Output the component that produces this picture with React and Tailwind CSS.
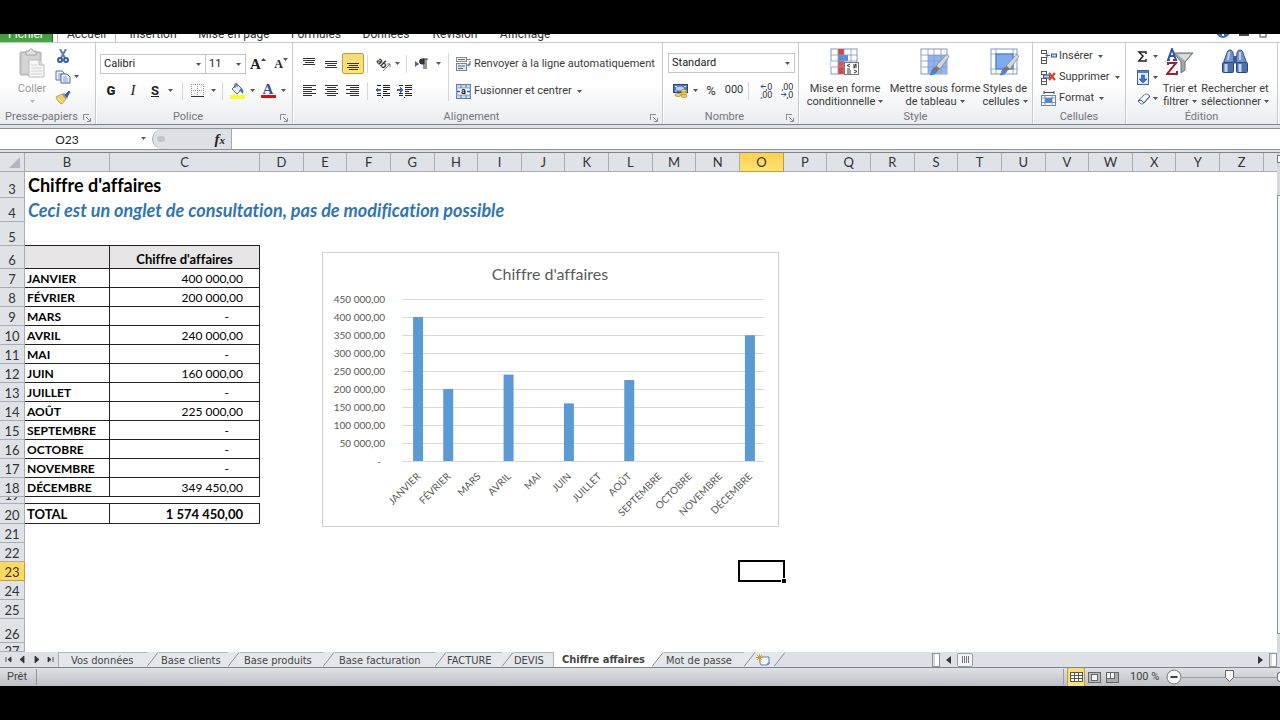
import React, { useState } from 'react';
import clsx from 'clsx';

const COLUMNS = 'DEFGHIJKLMNOPQRSTUVWXYZ'.split('');

const MONTHS = [
  { name: 'JANVIER', value: 400000, text: '400 000,00' },
  { name: 'FÉVRIER', value: 200000, text: '200 000,00' },
  { name: 'MARS', value: 0, text: '-' },
  { name: 'AVRIL', value: 240000, text: '240 000,00' },
  { name: 'MAI', value: 0, text: '-' },
  { name: 'JUIN', value: 160000, text: '160 000,00' },
  { name: 'JUILLET', value: 0, text: '-' },
  { name: 'AOÛT', value: 225000, text: '225 000,00' },
  { name: 'SEPTEMBRE', value: 0, text: '-' },
  { name: 'OCTOBRE', value: 0, text: '-' },
  { name: 'NOVEMBRE', value: 0, text: '-' },
  { name: 'DÉCEMBRE', value: 349450, text: '349 450,00' },
];

// Height of the row header content, without its bottom border
const ROW_HEIGHTS = {
  3: 'h-[25px]',
  4: 'h-[23px]',
  5: 'h-[23px]',
  6: 'h-[22px]',
  19: 'h-[6px]',
  20: 'h-[19px]',
  26: 'h-[23px]',
  27: 'h-[8px]',
};

const ROWS = Array.from({ length: 25 }, (_, i) => i + 3);

const Caret = ({ light }) => (
  <svg viewBox="0 0 5 3" className="w-[5px] h-[3px] shrink-0" aria-hidden="true">
    <path d="M0 0h5L2.5 3z" fill={light ? '#b5b5b5' : '#555'} />
  </svg>
);

const Sep = ({ tall }) => (
  <div className={clsx('w-px shrink-0 bg-[#d5d7da]', tall ? 'h-12' : 'h-[18px]')} />
);

const IconButton = ({ label, active, className, children }) => (
  <button
    type="button"
    aria-label={label}
    title={label}
    className={clsx(
      'h-[21px] flex items-center justify-center shrink-0 rounded-[2px]',
      active && 'bg-gradient-to-b from-[#fbd976] to-[#ffe56b] border border-[#c79b3b]',
      className || 'w-[22px]'
    )}
  >
    {children}
  </button>
);

const Lines = ({ rows, color = '#333' }) => (
  <svg viewBox="0 0 14 14" className="w-[14px] h-[14px]" shapeRendering="crispEdges">
    {rows.map(([x, y, w], i) => (
      <rect key={i} x={x} y={y} width={w} height="1" fill={color} />
    ))}
  </svg>
);

const IndentIcon = ({ out }) => (
  <svg viewBox="0 0 16 14" className="w-4 h-[14px]" shapeRendering="crispEdges">
    <path d="M2 1h4M8 1h7M8 3h7M8 5h7M8 7h4M2 9h4M8 9h7M2 11h4M8 11h7M7 13h1" stroke="#222" strokeWidth="1" transform="translate(0 .5)" />
    <path d={out ? 'M0 6l3-3v2h3v2H3v2z' : 'M6 6L3 3v2H0v2h3v2z'} fill="#3b63b5" />
  </svg>
);

const Grid = ({ children }) => (
  <svg viewBox="0 0 30 28" className="w-[30px] h-7">
    <rect x="1" y="1" width="26" height="25" fill="#fff" stroke="#7f9cc9" />
    {children}
  </svg>
);

const Brush = () => (
  <g>
    <path d="M28 7c1 1 1 2 0 3l-8 11-4-3 9-10c1-1 2-2 3-1z" fill="#cfd6de" stroke="#78828e" strokeWidth=".7" />
    <path d="M20 21l-4-3-2 2 3 3z" fill="#a86c3c" />
    <path d="M14 20l3 3c-1 3-5 4-7 4 2-2 1-5 4-7z" fill="#4c86d0" stroke="#2c5fa8" strokeWidth=".5" />
  </g>
);

const Group = ({ label, launcher, className, children }) => (
  <section className={clsx('flex flex-col border-r border-[#c6c9cd] shadow-[1px_0_0_#fff]', className)}>
    <div className="h-[66px] flex">{children}</div>
    <div className="h-[15px] pt-[2px] flex items-center text-[#73767c]">
      <span className="flex-1 text-center whitespace-nowrap">{label}</span>
      {launcher && (
        <button type="button" aria-label={`Options ${label}`} className="w-3 h-3 flex items-center">
          <svg viewBox="0 0 8 8" className="w-2 h-2" fill="none" stroke="#8a8d92">
            <path d="M.5 6V.5H6M3 3l4 4M7.500 4v3.500H4" />
          </svg>
        </button>
      )}
    </div>
  </section>
);

const BigButton = ({ icon, lines, muted, className }) => (
  <button type="button" className={clsx('flex flex-col items-center pt-[5px] shrink-0', muted && 'text-[#9a9a9a]', className)}>
    <span className="h-[34px] flex items-start">{icon}</span>
    <span className="leading-[13px] whitespace-nowrap">{lines[0]}</span>
    <span className="h-[13px] leading-[13px] whitespace-nowrap flex items-center gap-[3px]">
      {lines[1]}
      <Caret light={muted} />
    </span>
  </button>
);

const SmallButton = ({ icon, label }) => (
  <button type="button" className="h-[21px] flex items-center whitespace-nowrap">
    <span className="w-[18px]">{icon}</span>
    {label}
    <span className="ml-[5px]"><Caret /></span>
  </button>
);

const Combo = ({ label, value, className }) => (
  <div className={clsx('relative h-5 border border-[#c3c6ca] bg-white', className)}>
    <select aria-label={label} defaultValue={value} className="w-full h-full pl-[3px] pt-px appearance-none bg-transparent text-[#222] outline-none">
      <option>{value}</option>
    </select>
    <span className="absolute right-1 top-2 pointer-events-none"><Caret /></span>
  </div>
);

const RIBBON_TABS = [
  { name: 'Insertion', w: 'w-[74px]' },
  { name: 'Mise en page', w: 'w-[88px]' },
  { name: 'Formules', w: 'w-[76px]' },
  { name: 'Données', w: 'w-[64px]' },
  { name: 'Révision', w: 'w-[74px]' },
  { name: 'Affichage', w: 'w-[66px]' },
];

// Only the lower edge of the tab strip shows under the top band
const RibbonTabs = () => (
  <nav className="h-[9px] overflow-hidden flex items-end bg-white border-b border-[#c6c9cd] text-xs leading-4 text-[#333]">
    <button type="button" className="w-[53px] h-4 shrink-0 bg-gradient-to-b from-[#2f8f35] to-[#4aa83f] text-white border-r border-[#1d6b25]">Fichier</button>
    <button type="button" className="w-[59px] ml-1 h-4 shrink-0 border-x border-[#b9bcc1]">Accueil</button>
    {RIBBON_TABS.map((t) => (
      <button key={t.name} type="button" className={clsx('h-4 shrink-0 whitespace-nowrap', t.w)}>{t.name}</button>
    ))}
    <svg viewBox="0 0 70 16" className="w-[70px] h-4 ml-auto mr-3 mb-[3px]">
      <path d="M2 11l3-3 3 3M7 11l3-3 3 3" fill="none" stroke="#444" />
      <circle cx="25" cy="8" r="7" fill="#3d73c4" />
      <path d="M25 9v1M25 11v2" stroke="#fff" strokeWidth="2" />
      <path d="M41 12h10" stroke="#444" strokeWidth="2" />
      <rect x="62" y="6" width="6" height="8" fill="none" stroke="#444" />
    </svg>
  </nav>
);

const ClipboardGroup = () => (
  <Group label="Presse-papiers" launcher className="w-24">
    <BigButton
      muted
      className="w-8 ml-4"
      lines={['Coller', '']}
      icon={
        <svg viewBox="0 0 26 30" className="w-[26px] h-[30px]">
          <rect x="1" y="4" width="21" height="23" rx="1" fill="#c9c7c7" stroke="#b0aeae" />
          <rect x="3" y="6" width="17" height="19" fill="#d6d4d4" />
          <path d="M7 7V3h3c0-3 4-3 4 0h3v4z" fill="#e3e3e3" stroke="#a5a5a5" />
          <path d="M10 12h10l5 5v12H10z" fill="#f7f7f7" stroke="#bdbdbd" />
          <path d="M20 12v5h5" fill="#ddd" stroke="#bdbdbd" />
          <path d="M12 17h6M12 20h11M12 23h11M12 26h11" stroke="#d2d2d2" />
        </svg>
      }
    />
    <div className="ml-[7px] pt-[2px] flex flex-col">
      <IconButton label="Couper" className="w-4">
        <svg viewBox="0 0 12 14" className="w-3 h-[14px]" fill="none">
          <path d="M3 0l5 9M9 0L4 9" stroke="#5d7fb0" strokeWidth="2" />
          <circle cx="3" cy="11" r="2" stroke="#2f5ea6" strokeWidth="2" />
          <circle cx="9" cy="11" r="2" stroke="#2f5ea6" strokeWidth="2" />
        </svg>
      </IconButton>
      <IconButton label="Copier" className="w-6">
        <svg viewBox="0 0 16 14" className="w-4 h-[14px]">
          <path d="M1 1h6l2 2v7H1z" fill="#eef4fc" stroke="#4f77b3" />
          <path d="M3 4h4M3 6h4M3 8h3" stroke="#7da0d2" />
          <path d="M6 4h6l3 3v6H6z" fill="#f6f9fe" stroke="#3c67a8" />
          <path d="M8 7h4M8 9h5M8 11h5" stroke="#6f96cd" />
        </svg>
        <span className="ml-[3px]"><Caret /></span>
      </IconButton>
      <IconButton label="Reproduire la mise en forme" className="w-4">
        <svg viewBox="0 0 16 14" className="w-4 h-[14px]">
          <path d="M1 6l6-3 4 5-4 5C4 12 2 9 1 6z" fill="#f3cf63" stroke="#b88a2a" strokeWidth=".7" />
          <path d="M7 3l2-1 4 5-2 1z" fill="#8894ad" />
          <path d="M10 4l4-4 1 1-3 5z" fill="#3f5ea3" stroke="#3f5ea3" />
          <path d="M3 7l5 5" stroke="#fbe9a9" />
        </svg>
      </IconButton>
    </div>
  </Group>
);

const FontGroup = () => (
  <Group label="Police" launcher className="w-[197px]">
    <div className="pt-[10px] pl-1 flex flex-col gap-[6px]">
      <div className="flex items-center">
        <Combo label="Police" value="Calibri" className="w-[106px]" />
        <Combo label="Taille" value="11" className="w-[41px] -ml-px" />
        <IconButton label="Agrandir la police" className="w-[24px]">
          <span className="font-['Liberation_Serif'] font-bold text-[15px] text-[#222] leading-5">A</span>
          <svg viewBox="0 0 5 3" className="w-[5px] h-[3px] mb-2"><path d="M0 3h5L2.500 0z" fill="#444" /></svg>
        </IconButton>
        <IconButton label="Réduire la police" className="w-[22px]">
          <span className="font-['Liberation_Serif'] font-bold text-xs text-[#222] leading-5">A</span>
          <span className="mb-2 flex"><Caret /></span>
        </IconButton>
      </div>
      <div className="flex items-center text-[#222]">
        <IconButton label="Gras"><b className="text-[13px] font-black">G</b></IconButton>
        <IconButton label="Italique"><i className="text-[15px] font-['Liberation_Serif']">I</i></IconButton>
        <IconButton label="Souligné"><u className="text-[13px] font-bold">S</u></IconButton>
        <IconButton label="Type de soulignement" className="w-2"><Caret /></IconButton>
        <div className="px-2"><Sep /></div>
        <IconButton label="Bordures" className="w-[13px]">
          <svg viewBox="0 0 13 13" className="w-[13px] h-[13px]" shapeRendering="crispEdges">
            <path d="M0 .5h13M0 6.500h13M.5 0v12M6.500 0v12M12.500 0v12" stroke="#8f8f8f" strokeDasharray="1 1" />
            <path d="M0 12.500h13" stroke="#333" />
          </svg>
        </IconButton>
        <IconButton label="Options de bordure" className="w-[18px]"><Caret /></IconButton>
        <div className="pr-[6px]"><Sep /></div>
        <IconButton label="Couleur de remplissage" className="w-4">
          <svg viewBox="0 0 16 16" className="w-4 h-4">
            <path d="M3 6l5-5 5 5-5 5z" fill="#e6eef9" stroke="#51668b" />
            <path d="M6 5V1c0-1 2-1 2 0v3" fill="none" stroke="#555" />
            <path d="M12 5c2 1 3 3 2 6-1-1-2-3-4-3z" fill="#3b6fc0" />
            <rect x="1" y="12" width="15" height="4" fill="#fdfd1c" />
          </svg>
        </IconButton>
        <IconButton label="Choix du remplissage" className="w-[15px]"><Caret /></IconButton>
        <IconButton label="Couleur de police" className="w-4">
          <span className="flex flex-col items-center">
            <span className="font-['Liberation_Serif'] font-bold text-[15px] leading-3 text-[#34548c]">A</span>
            <span className="w-[15px] h-[3px] bg-[#e20c0c]" />
          </span>
        </IconButton>
        <IconButton label="Choix de la couleur" className="w-[14px]"><Caret /></IconButton>
      </div>
    </div>
  </Group>
);

const AlignGroup = () => (
  <Group label="Alignement" launcher className="w-[370px]">
    <div className="pt-[10px] pl-[5px] flex flex-col gap-[6px] w-[155px] shrink-0">
      <div className="flex items-center">
        <IconButton label="Aligner en haut"><Lines rows={[[1, 1, 12], [1, 3, 12], [3, 5, 9], [1, 7, 12]]} /></IconButton>
        <IconButton label="Aligner au centre"><Lines rows={[[1, 4, 12], [1, 6, 12], [3, 8, 9], [1, 10, 12]]} /></IconButton>
        <IconButton label="Aligner en bas" active><Lines rows={[[1, 6, 12], [3, 8, 9], [1, 10, 12], [3, 12, 9]]} /></IconButton>
        <div className="pl-[3px] pr-2"><Sep /></div>
        <IconButton label="Orientation" className="w-[24px]">
          <svg viewBox="0 0 16 16" className="w-4 h-4 mr-[3px]">
            <text x="0" y="9" fontSize="10" fontWeight="bold" fill="#333" transform="rotate(45 4 7)">ab</text>
            <path d="M7 15l7-7M14 8v3M14 8h-3" stroke="#777" fill="none" />
          </svg>
          <Caret />
        </IconButton>
        <div className="px-[6px]"><Sep /></div>
        <IconButton label="Sens du texte" className="w-[30px]">
          <svg viewBox="0 0 13 12" className="w-[13px] h-3 mr-2">
            <path d="M0 3l4 3-4 3z" fill="#3b63b5" />
            <path d="M9 1H7a2 2 0 000 5h2zM9 1v10M11 1v10M8 1h5" fill="#333" stroke="#333" />
          </svg>
          <Caret />
        </IconButton>
      </div>
      <div className="flex items-center">
        <IconButton label="Aligner à gauche"><Lines rows={[[1, 1, 13], [1, 3, 9], [1, 5, 13], [1, 7, 9], [1, 9, 13], [1, 11, 9]]} /></IconButton>
        <IconButton label="Centrer"><Lines rows={[[1, 1, 13], [3, 3, 9], [1, 5, 13], [3, 7, 9], [1, 9, 13], [3, 11, 9]]} /></IconButton>
        <IconButton label="Aligner à droite"><Lines rows={[[0, 1, 13], [4, 3, 9], [0, 5, 13], [4, 7, 9], [0, 9, 13], [4, 11, 9]]} /></IconButton>
        <div className="pl-[3px] pr-1"><Sep /></div>
        <IconButton label="Diminuer le retrait"><IndentIcon out /></IconButton>
        <IconButton label="Augmenter le retrait"><IndentIcon /></IconButton>
      </div>
    </div>
    <div className="pt-[10px]"><Sep tall /></div>
    <div className="pt-[11px] pl-[7px] flex flex-col gap-[6px] items-start">
      <button type="button" className="h-[21px] flex items-center gap-[3px] whitespace-nowrap">
        <svg viewBox="0 0 15 15" className="w-[15px] h-[15px]">
          <rect x=".5" y=".5" width="10" height="4" fill="#f2f2f2" stroke="#8b8b8b" />
          <rect x=".5" y="6.500" width="10" height="7" fill="#dfe8f5" stroke="#6d86ae" />
          <path d="M2 2.500h7M2 9h7M2 11.500h5" stroke="#666" />
          <path d="M14 4v4h-2M13 6.500L11.500 8 13 9.500" stroke="#3560ad" fill="none" />
          <path d="M11 2.500h3.500" stroke="#8b8b8b" />
        </svg>
        Renvoyer à la ligne automatiquement
      </button>
      <button type="button" className="h-[21px] flex items-center gap-[3px] whitespace-nowrap">
        <svg viewBox="0 0 15 15" className="w-[15px] h-[15px]">
          <rect x=".5" y=".5" width="14" height="14" fill="#c9d9f0" stroke="#5d7db0" />
          <rect x="1" y="4" width="13" height="7" fill="#fff" stroke="#8aa4cf" />
          <path d="M5 0v4M10 0v4M5 11v4M10 11v4" stroke="#5d7db0" />
          <path d="M1 7.500h3M14 7.500h-3" stroke="#2f59a8" strokeWidth="1.500" />
          <text x="7.500" y="10" textAnchor="middle" fontSize="9" fontWeight="bold" fill="#111">a</text>
        </svg>
        Fusionner et centrer
        <span className="ml-[2px]"><Caret /></span>
      </button>
    </div>
  </Group>
);

const NumberGroup = () => (
  <Group label="Nombre" launcher className="w-[136px]">
    <div className="pt-[10px] pl-[5px] flex flex-col gap-[7px]">
      <Combo label="Format de nombre" value="Standard" className="w-[127px]" />
      <div className="flex items-center pl-1 text-[#333]">
        <IconButton label="Format comptable" className="w-[26px]">
          <svg viewBox="0 0 16 15" className="w-4 h-[15px] mr-1">
            <rect x=".5" y="1.500" width="14" height="8" fill="#4c79bd" stroke="#23498a" />
            <ellipse cx="7" cy="5.500" rx="4" ry="2" fill="#b9d0ef" />
            <path d="M2 3.500h2M11 3.500h2M2 8h2" stroke="#dbe7f7" />
            <ellipse cx="11" cy="8" rx="3" ry="1.500" fill="#f5d35f" stroke="#a77a18" strokeWidth=".6" />
            <ellipse cx="11" cy="10.500" rx="3" ry="1.500" fill="#f5d35f" stroke="#a77a18" strokeWidth=".6" />
            <ellipse cx="11" cy="13" rx="3" ry="1.500" fill="#f5d35f" stroke="#a77a18" strokeWidth=".6" />
            <ellipse cx="5" cy="12" rx="3" ry="1.500" fill="#f5d35f" stroke="#a77a18" strokeWidth=".6" />
          </svg>
          <Caret />
        </IconButton>
        <IconButton label="Pourcentage" className="w-[26px]"><span className="text-[13px]">%</span></IconButton>
        <IconButton label="Séparateur de milliers" className="w-5"><span className="text-[11px]">000</span></IconButton>
        <div className="pl-1 pr-[6px]"><Sep /></div>
        <IconButton label="Ajouter une décimale">
          <span className="flex flex-col items-end text-[9px] leading-[8px]">
            <span className="flex items-center">
              <svg viewBox="0 0 6 5" className="w-[6px] h-[5px]"><path d="M6 2.500H1M3 .5l-2 2 2 2" stroke="#2f59a8" fill="none" /></svg>
              ,0
            </span>
            <span>,00</span>
          </span>
        </IconButton>
        <IconButton label="Réduire les décimales" className="w-[20px]">
          <span className="flex flex-col items-end text-[9px] leading-[8px]">
            <span>,00</span>
            <span className="flex items-center">
              <svg viewBox="0 0 6 5" className="w-[6px] h-[5px]"><path d="M0 2.500h5M3 .5l2 2-2 2" stroke="#2f59a8" fill="none" /></svg>
              ,0
            </span>
          </span>
        </IconButton>
      </div>
    </div>
  </Group>
);

const StyleGroup = () => (
  <Group label="Style" className="w-[234px]">
    <BigButton
      className="w-[92px]"
      lines={['Mise en forme', 'conditionnelle']}
      icon={
        <Grid>
          <rect x="8" y="1" width="6" height="6" fill="#d9463a" />
          <rect x="8" y="7" width="10" height="6" fill="#5b8ae0" />
          <rect x="8" y="13" width="6" height="6" fill="#e0574b" />
          <rect x="1" y="13" width="7" height="6" fill="#fff" />
          <rect x="8" y="19" width="6" height="7" fill="#d9463a" />
          <path d="M1 7h26M1 13h26M1 19h26M8 1v25M14 1v25M21 1v25" stroke="#7f9cc9" strokeWidth=".8" />
          <rect x="14.500" y="14.500" width="14" height="12" fill="#fff" stroke="#777" />
          <path d="M20 16l-3 1.500 3 1.500M17 21h3M23 17h4M23 19h4M26 15.500l-2 5M17 23h4M17 25h4M24 22l3 1.500-3 1.500" stroke="#222" fill="none" strokeWidth=".9" />
        </Grid>
      }
    />
    <BigButton
      className="w-[88px]"
      lines={['Mettre sous forme', 'de tableau']}
      icon={
        <Grid>
          <rect x="8" y="7" width="19" height="19" fill="#8fb4ee" />
          <path d="M1 7h26M1 13h26M1 19h26M8 1v25M14 1v25M21 1v25" stroke="#7f9cc9" strokeWidth=".8" />
          <Brush />
        </Grid>
      }
    />
    <BigButton
      className="w-[52px]"
      lines={['Styles de', 'cellules']}
      icon={
        <Grid>
          <path d="M1 6h26M1 21h26M6 1v25M23 1v25" stroke="#7f9cc9" strokeWidth=".8" />
          <rect x="6" y="6" width="17" height="15" fill="#7eaaf0" stroke="#3f6fc0" />
          <Brush />
        </Grid>
      }
    />
  </Group>
);

const CellsGroup = () => (
  <Group label="Cellules" className="w-[93px]">
    <div className="pt-[3px] pl-2 flex flex-col items-start">
      <SmallButton
        label="Insérer"
        icon={
          <svg viewBox="0 0 16 14" className="w-4 h-[14px]" fill="#fff" stroke="#555">
            <rect x=".5" y=".5" width="5" height="3" />
            <rect x=".5" y="7.500" width="5" height="6" />
            <path d="M.5 10.500h5" />
            <rect x="10.500" y="4" width="5" height="3" fill="#b9d0f2" stroke="#2f59a8" />
            <path d="M9 5.500H5M7 3.500l-2 2 2 2" stroke="#2f59a8" fill="none" />
          </svg>
        }
      />
      <SmallButton
        label="Supprimer"
        icon={
          <svg viewBox="0 0 16 14" className="w-4 h-[14px]" fill="#fff" stroke="#555">
            <rect x=".5" y=".5" width="5" height="3" />
            <rect x=".5" y="7.500" width="5" height="6" />
            <path d="M.5 10.500h5" />
            <rect x="2.500" y="4" width="6" height="3" fill="#b9d0f2" stroke="#2f59a8" />
            <path d="M8 2l6 7M14 2L8 9" stroke="#dd3c1e" strokeWidth="2" />
          </svg>
        }
      />
      <SmallButton
        label="Format"
        icon={
          <svg viewBox="0 0 16 15" className="w-4 h-[15px]" fill="#fff">
            <path d="M3 1.500h10M3 0v3M13 0v3" stroke="#444" />
            <rect x=".5" y="4.500" width="14" height="10" stroke="#6b87b5" />
            <rect x="4" y="7" width="7" height="5" fill="#4f86dd" />
            <path d="M4 4v10M11 4v10M1 7h14M1 11.500h14" stroke="#6b87b5" strokeWidth=".8" />
          </svg>
        }
      />
    </div>
  </Group>
);

const EditGroup = () => (
  <Group label="Édition" className="flex-1 mr-[2px]">
    <div className="pt-[3px] pl-2 flex flex-col">
      <IconButton label="Somme" className="w-[26px]">
        <svg viewBox="0 0 11 11" className="w-[11px] h-[11px] mr-[5px]">
          <path d="M9 3V1H2l4 4-4 5h7V8" fill="none" stroke="#222" strokeWidth="1.500" />
        </svg>
        <Caret />
      </IconButton>
      <IconButton label="Remplissage" className="w-[26px]">
        <svg viewBox="0 0 12 15" className="w-3 h-[15px] mr-1">
          <rect x=".5" y=".5" width="11" height="14" fill="#e6effc" stroke="#3e62a3" />
          <rect x="1" y="1" width="10" height="2" fill="#4f7fd0" />
          <path d="M4.500 5h3v4H10l-4 4-4-4h2.500z" fill="#3571dc" stroke="#1f4ea8" strokeWidth=".6" />
        </svg>
        <Caret />
      </IconButton>
      <IconButton label="Effacer" className="w-[26px]">
        <svg viewBox="0 0 14 12" className="w-[14px] h-3 mr-[2px]">
          <path d="M1 8l6-6c1-1 2-1 3-1l3 2-6 7c-1 1-2 1-3 1z" fill="#f0f3f8" stroke="#65758f" />
          <path d="M1 8l3-1 3 3M7 10l6-7" stroke="#35528c" fill="none" />
        </svg>
        <Caret />
      </IconButton>
    </div>
    <BigButton
      className="w-[40px]"
      lines={['Trier et', 'filtrer']}
      icon={
        <svg viewBox="0 0 28 28" className="w-7 h-7" fill="none">
          <path d="M8 5h19l-8 9v8l-4 3V14z" fill="#a3a6aa" stroke="#6e7276" />
          <path d="M11 6h14l-6 7z" fill="#d9dbde" />
          <path d="M1 12h3M7 12h4M2 12l4-11 4 11M4 8h4" stroke="#2c56a6" strokeWidth="2" />
          <path d="M2 17v-2h8L1 26h10v-3" stroke="#9b2331" strokeWidth="2" />
        </svg>
      }
    />
    <BigButton
      className="w-[70px]"
      lines={['Rechercher et', 'sélectionner']}
      icon={
        <svg viewBox="0 0 28 28" className="w-7 h-7">
          <path d="M6 5c0-4 6-4 6 0l1 8v3H3v-3z" fill="#6f93cb" stroke="#34568e" />
          <path d="M22 5c0-4-6-4-6 0l-1 8v3h10v-3z" fill="#6f93cb" stroke="#34568e" />
          <rect x="12" y="8" width="4" height="7" fill="#3a5d96" />
          <rect x="1.500" y="14.500" width="11" height="10" rx="1" fill="#4c72ad" stroke="#27477c" />
          <rect x="15.500" y="14.500" width="11" height="10" rx="1" fill="#4c72ad" stroke="#27477c" />
          <path d="M5 16v8M19 16v8" stroke="#c3d7f3" strokeWidth="3" />
          <path d="M8 4l-1 8M19 4v8" stroke="#bdd2f0" strokeWidth="2" />
        </svg>
      }
    />
  </Group>
);

const FormulaBar = () => (
  <div className="h-7 pt-[3px] flex flex-col bg-[#dde1e6] border-t border-[#7f858d]">
    <div className="h-[22px] flex border-y border-[#8e939a] bg-white">
      <div className="relative w-[152px] shrink-0">
        <input aria-label="Zone Nom" defaultValue="O23" className="w-[134px] h-full text-center text-xs font-['Lato'] text-[#222] outline-none" />
        <span className="absolute right-[6px] top-2"><Caret /></span>
      </div>
      <div className="w-20 shrink-0 flex items-center justify-between pl-1 pr-[6px] rounded-l-full bg-[#dde1e6] border-l border-r border-[#a4a9b0]">
        <span className="w-2 h-[6px] rounded-full bg-[#c2c6cc]" />
        <button type="button" aria-label="Insérer une fonction" className="font-['Liberation_Serif'] italic font-bold text-[15px] leading-4 text-[#222]">
          f<span className="text-[11px]">x</span>
        </button>
      </div>
      <input aria-label="Barre de formule" className="flex-1 min-w-0 px-1 text-xs outline-none" />
    </div>
  </div>
);

const Chart = () => {
  const ticks = ['-', '50 000,00', '100 000,00', '150 000,00', '200 000,00', '250 000,00', '300 000,00', '350 000,00', '400 000,00', '450 000,00'];
  const base = 208;
  const step = 362 / 12;

  return (
    <svg
      viewBox="0 0 457 275"
      role="img"
      aria-label="Chiffre d'affaires par mois"
      className="absolute left-[322px] top-[99px] w-[457px] h-[275px] bg-white font-['Lato'] fill-[#595959]"
    >
      <rect x=".5" y=".5" width="456" height="274" fill="none" stroke="#d0d0d0" />
      <text x="228" y="28" textAnchor="middle" fontSize="16">Chiffre d'affaires</text>
      {ticks.map((t, i) => (
        <g key={t}>
          <path d={`M80 ${base + 1.5 - i * 18}h362`} stroke="#d9d9d9" />
          <text x={i ? 63 : 59} y={base + 5 - i * 18} textAnchor="end" fontSize="10">{t}</text>
        </g>
      ))}
      {MONTHS.map((m, i) => {
        const h = (m.value / 50000) * 18;
        const cx = 81 + step * (i + 0.5);
        return (
          <g key={m.name}>
            <rect x={cx - 5} y={base + 1 - h} width="10" height={h} fill="#5b9bd5" />
            <text x={cx + 3} y="225" textAnchor="end" fontSize="10" transform={`rotate(-45 ${cx + 3} 225)`}>{m.name}</text>
          </g>
        );
      })}
    </svg>
  );
};

const cellB = (row) => {
  if (row >= 7 && row <= 18) return MONTHS[row - 7].name;
  return row === 20 ? 'TOTAL' : '';
};

const cellC = (row) => {
  if (row === 6) return "Chiffre d'affaires";
  if (row >= 7 && row <= 18) return MONTHS[row - 7].text;
  return row === 20 ? '1 574 450,00' : '';
};

const SheetRow = ({ row }) => {
  const inTable = (row >= 6 && row <= 18) || row === 20;
  const bottomLine = inTable || row === 5 || row === 19;
  const value = cellC(row);

  return (
    <tr>
      <th
        scope="row"
        className={clsx(
          'p-0 border-b border-r font-normal text-[13px] text-[#333]',
          row === 23 ? 'bg-[#ffd95f] border-[#c79b3b]' : 'bg-[#dfe3e8] border-[#a9adb3]'
        )}
      >
        <div className={clsx('flex overflow-hidden justify-center leading-4', row === 27 ? 'items-start' : 'items-end', ROW_HEIGHTS[row] || 'h-[18px]')}>
          {row}
        </div>
      </th>
      {row === 3 || row === 4 ? (
        <td colSpan={COLUMNS.length + 3} className="p-0 pl-[3px] whitespace-nowrap align-middle">
          {row === 3 ? (
            <h1 className="text-lg leading-[22px] font-bold text-black">Chiffre d'affaires</h1>
          ) : (
            <p className="text-lg leading-5 font-bold italic text-[#2e75b6]">Ceci est un onglet de consultation, pas de modification possible</p>
          )}
        </td>
      ) : (
        <>
          <td
            className={clsx(
              'p-0 pl-[2px] font-bold leading-[17px] align-bottom text-black',
              row === 20 ? 'text-[13px]' : 'text-xs',
              row === 6 && 'bg-[#e7e5e6]',
              bottomLine && 'border-b border-[#222]',
              inTable && 'border-r'
            )}
          >
            {cellB(row)}
          </td>
          <td
            className={clsx(
              'p-0 leading-[17px] align-bottom text-black',
              row === 6 && 'text-center font-bold text-[13px] bg-[#e7e5e6]',
              row >= 7 && row <= 18 && 'text-right text-xs',
              value === '-' ? 'pr-[30px]' : row !== 6 && 'pr-4',
              row === 20 && 'text-right font-bold text-[13px]',
              bottomLine && 'border-b border-[#222]',
              inTable && 'border-r'
            )}
          >
            {value}
          </td>
          {COLUMNS.map((c) => (
            <td key={c} className="p-0 relative">
              {c === 'O' && row === 23 && (
                <div className="absolute -top-[2px] -left-[2px] -bottom-px -right-px border-2 border-black">
                  <span className="absolute -right-[3px] -bottom-[3px] w-[5px] h-[5px] bg-black border-t border-l border-white" />
                </div>
              )}
            </td>
          ))}
          <td className="p-0" />
        </>
      )}
    </tr>
  );
};

const Sheet = () => (
  <div className="flex bg-white border-t border-[#7f858d] font-['Lato'] [font-variant-ligatures:none]">
    <div className="relative flex-1 min-w-0">
      <table className="w-full table-fixed border-separate border-spacing-0">
        <colgroup>
          <col className="w-[25px]" />
          <col className="w-[85px]" />
          <col className="w-[150px]" />
          {COLUMNS.map((c) => <col key={c} />)}
          <col className="w-[13px]" />
        </colgroup>
        <thead>
          <tr className="h-[19px] text-[13px] leading-[18px] text-[#333]">
            <td className="p-0 bg-[#dfe3e8] border-r border-b border-[#a9adb3]">
              <svg viewBox="0 0 11 11" className="w-[11px] h-[11px] ml-auto mr-1"><path d="M11 0v11H0z" fill="#b4b8be" /></svg>
            </td>
            {['B', 'C', ...COLUMNS].map((c) => (
              <th
                key={c}
                scope="col"
                className={clsx(
                  'p-0 font-normal border-r border-b',
                  c === 'O' ? 'bg-gradient-to-b from-[#ffd050] to-[#ffe36e] border-[#c79b3b]' : 'bg-[#dfe3e8] border-[#a9adb3]'
                )}
              >
                {c}
              </th>
            ))}
            <td className="p-0 bg-[#dfe3e8] border-b border-[#a9adb3]" />
          </tr>
        </thead>
        <tbody>
          {ROWS.map((r) => <SheetRow key={r} row={r} />)}
        </tbody>
      </table>
      <Chart />
    </div>
    <div className="w-[3px] shrink-0 bg-[#d6dae0] flex flex-col py-[2px]">
      <div className="h-2 border border-r-0 border-[#777] bg-white" />
      <div className="mt-8 flex-1 mb-4 border border-r-0 border-[#8e939a] bg-[#f4f5f7]" />
    </div>
  </div>
);

const TABS = [
  { name: 'Vos données', w: 'w-[88px] pl-3' },
  { name: 'Base clients', w: 'w-[69px] pl-[2px]' },
  { name: 'Base produits', w: 'w-[83px] pl-1' },
  { name: 'Base facturation', w: 'w-[100px] pl-1' },
  { name: 'FACTURE', w: 'w-[55px]' },
  { name: 'DEVIS', w: 'w-[40px]' },
  { name: 'Chiffre affaires', w: 'w-[98px] pl-2' },
  { name: 'Mot de passe', w: 'w-[80px] pl-[2px]' },
];

const Slash = ({ left, right }) => (
  <svg viewBox="0 0 12 15" className="w-3 h-[15px] shrink-0">
    <path d="M0 0h11L0 15z" fill={left} />
    <path d="M12 0v15H0L11 0z" fill={right} />
    <path d="M0 14.500L11 .5" stroke="#8e939a" fill="none" />
  </svg>
);

const SheetTabs = () => {
  const [active, setActive] = useState('Chiffre affaires');
  const fill = (name) => (name === active ? '#ffffff' : '#e4e7eb');

  return (
    <div className="h-4 flex items-center bg-[#dde1e7] border-b border-[#7f858d] font-['DejaVu_Sans_Condensed'] text-[#444]">
      <div className="w-[59px] h-full shrink-0 flex items-center justify-around pl-px border-r border-[#a9adb3]">
        {['M2 2v5M7 2v5L4 4.500z', 'M6 1v7L2 4.500z', 'M3 1v7l4-3.500z', 'M7 2v5M2 2v5l3-2.500z'].map((d) => (
          <button key={d} type="button" aria-label="Défiler les onglets" className="w-[9px]">
            <svg viewBox="0 0 9 9" className="w-[9px] h-[9px]"><path d={d} fill="#333" stroke="#333" strokeWidth=".8" /></svg>
          </button>
        ))}
      </div>
      {TABS.map((t, i) => (
        <React.Fragment key={t.name}>
          <button
            type="button"
            onClick={() => setActive(t.name)}
            className={clsx(
              'h-[15px] shrink-0 text-left text-[11px] leading-[15px] whitespace-nowrap',
              t.name === active ? 'bg-white font-bold' : 'bg-[#e4e7eb] border-t border-[#b4b8be]',
              t.name === 'DEVIS' && 'border-r',
              t.w
            )}
          >
            {t.name}
          </button>
          {t.name !== 'DEVIS' && <Slash left={fill(t.name)} right={fill(TABS[i + 1]?.name)} />}
        </React.Fragment>
      ))}
      <button type="button" aria-label="Insérer une feuille" className="w-[18px] h-[15px] shrink-0 bg-[#e4e7eb] flex items-center">
        <svg viewBox="0 0 15 12" className="w-[15px] h-3">
          <path d="M4 3h9v7l-2 1H5L4 9z" fill="#f5f8fd" stroke="#5f7fb4" />
          <path d="M11 11c0-2 1-2 3-2" stroke="#5f7fb4" fill="none" />
          <path d="M3.500 0v7M0 3.500h7M1 1l5 5M6 1L1 6" stroke="#e09a28" />
        </svg>
      </button>
      <Slash left="#e4e7eb" right="#dde1e7" />
      <div className="flex-1" />
      <div className="w-[345px] h-full shrink-0 flex items-center">
        <span className="w-2 h-[14px] border border-[#8e939a] bg-white shadow-[inset_2px_0_0_#d5d8dd]" />
        <button type="button" aria-label="Défiler à gauche" className="w-[17px] flex justify-center">
          <svg viewBox="0 0 5 8" className="w-[5px] h-2"><path d="M5 0v8L0 4z" fill="#333" /></svg>
        </button>
        <span className="w-4 h-[14px] flex justify-center items-center gap-px border border-[#9a9fa6] rounded-[2px] bg-[#f2f3f5]">
          <i className="w-px h-[7px] bg-[#777]" />
          <i className="w-px h-[7px] bg-[#777]" />
          <i className="w-px h-[7px] bg-[#777]" />
          <i className="w-px h-[7px] bg-[#777]" />
        </span>
        <span className="flex-1" />
        <button type="button" aria-label="Défiler à droite" className="w-[17px] flex justify-center">
          <svg viewBox="0 0 5 8" className="w-[5px] h-2"><path d="M0 0v8l5-4z" fill="#333" /></svg>
        </button>
        <span className="w-2 h-[14px] border border-[#8e939a] bg-white shadow-[inset_2px_0_0_#d5d8dd]" />
      </div>
      <div className="w-[3px]" />
    </div>
  );
};

const StatusBar = () => (
  <footer className="h-[18px] flex items-center overflow-hidden bg-gradient-to-b from-[#dfe2e5] to-[#bcc0c4] text-[#444]">
    <span className="w-9 pl-[7px] shrink-0">Prêt</span>
    <span className="w-px h-4 bg-[#8e939a]" />
    <span className="flex-1" />
    <span className="w-px h-4 mr-[3px] bg-[#9a9fa6]" />
    <IconButton label="Normal" active className="w-[18px]">
      <svg viewBox="0 0 13 10" className="w-[13px] h-[10px]" fill="#fff" stroke="#555" shapeRendering="crispEdges">
        <path d="M.5 .5h12v9H.5zM.5 3.500h12M.5 6.500h12M4.500 .5v9M8.500 .5v9" />
      </svg>
    </IconButton>
    <IconButton label="Mise en page" className="w-[18px]">
      <svg viewBox="0 0 13 11" className="w-[13px] h-[11px]" fill="#b7bbc0" stroke="#666" shapeRendering="crispEdges">
        <path d="M.5 .5h12v10H.5z" />
        <path d="M3.500 2.500h6v6h-6z" fill="#f4f4f4" />
      </svg>
    </IconButton>
    <IconButton label="Aperçu des sauts de page" className="w-[18px]">
      <svg viewBox="0 0 13 11" className="w-[13px] h-[11px]" fill="#a9adb3" stroke="#666" shapeRendering="crispEdges">
        <path d="M.5 .5h12v10H.5z" />
        <path d="M.5 .5h4v6h-4zM4.500 .5h4v6h-4z" fill="#f4f4f4" />
      </svg>
    </IconButton>
    <span className="w-[45px] pl-[9px] shrink-0 whitespace-nowrap">100 %</span>
    <button type="button" aria-label="Zoom arrière" className="w-4 shrink-0">
      <svg viewBox="0 0 16 16" className="w-4 h-4">
        <circle cx="8" cy="8" r="7" fill="#f4f5f6" stroke="#777" />
        <path d="M4.500 8h7" stroke="#444" strokeWidth="2" />
      </svg>
    </button>
    <label className="relative w-[95px] h-[18px] shrink-0 flex items-center">
      <span className="w-full h-px bg-[#9a9fa6]" />
      <svg viewBox="0 0 9 12" className="absolute left-[43px] top-[2px] w-[9px] h-3"><path d="M.5 .5h8v7l-4 4-4-4z" fill="#f7f7f7" stroke="#666" /></svg>
      <input type="range" aria-label="Zoom" min="10" max="190" defaultValue="100" className="absolute inset-0 w-full h-full opacity-0" />
    </label>
    <span className="w-[3px] h-[10px] shrink-0 rounded-l-full border border-r-0 border-[#777] bg-white" />
  </footer>
);

const App = () => (
  <div className="min-h-screen pt-[34px] bg-black font-['Roboto',sans-serif] text-[11px] text-[#3b3b3b]">
    <RibbonTabs />
    <div className="flex h-[81px] overflow-hidden bg-gradient-to-b from-white from-50% to-[#e9ecef]">
      <ClipboardGroup />
      <FontGroup />
      <AlignGroup />
      <NumberGroup />
      <StyleGroup />
      <CellsGroup />
      <EditGroup />
    </div>
    <FormulaBar />
    <Sheet />
    <SheetTabs />
    <StatusBar />
  </div>
);

export default App;
